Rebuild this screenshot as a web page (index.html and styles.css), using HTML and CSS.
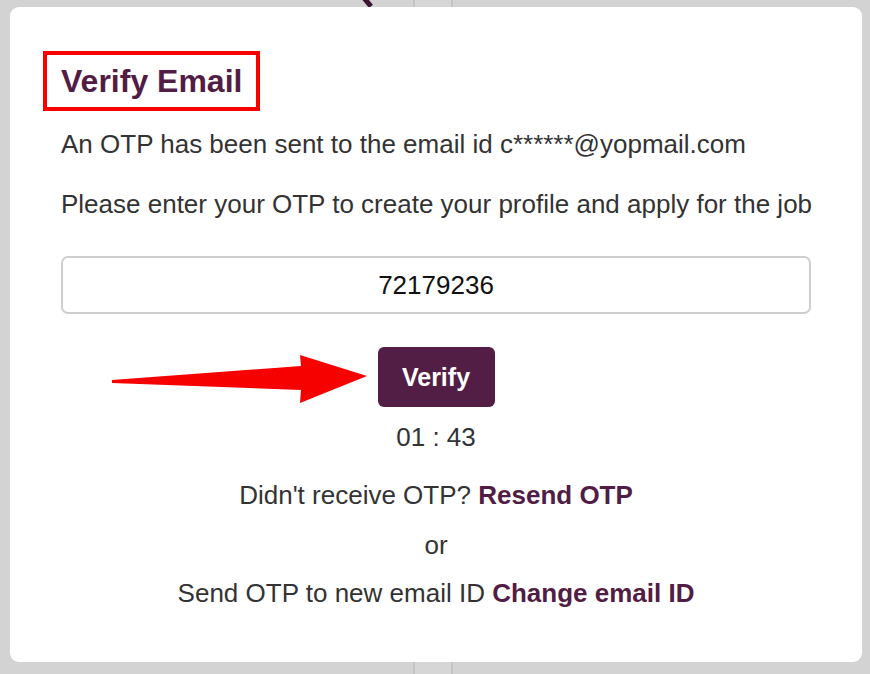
FILE: index.html
```html
<!DOCTYPE html>
<html lang="en">
<head>
  <meta charset="UTF-8" />
  <meta name="viewport" content="width=device-width, initial-scale=1.0"/>
  <title>Verify Email</title>
  <link rel="stylesheet" href="styles.css">
</head>
<body>

  <div class="backdrop-strip"></div>
  <div class="backdrop-mark"></div>

  <div class="modal">
    <div class="title-box">
      <h2>Verify Email</h2>
    </div>

    <p class="info">An OTP has been sent to the email id c******@yopmail.com</p>
    <p class="info">Please enter your OTP to create your profile and apply for the job</p>

    <input class="otp-input" type="text" value="72179236">

    <div class="actions">
      <button class="verify-btn">Verify</button>
      <p class="timer">01 : 43</p>
      <p class="line resend">Didn't receive OTP? <a href="#">Resend OTP</a></p>
      <p class="line or">or</p>
      <p class="line change">Send OTP to new email ID <a href="#">Change email ID</a></p>
    </div>
  </div>

  <svg class="arrow" width="280" height="60" viewBox="100 350 280 60">
    <polygon points="112,380 301,366 300,355 367,376 300,403 301,390 112,383" fill="#f70000"/>
  </svg>

</body>
</html>
```

FILE: styles.css
```css
body {
  font-family: "Liberation Sans", Arial, sans-serif;
  margin: 0;
  padding: 0;
  background-color: #d3d3d3;
  color: #333;
  width: 870px;
  height: 674px;
  overflow: hidden;
  position: relative;
}

.backdrop-strip {
  position: absolute;
  left: 413px;
  top: 0;
  width: 36px;
  height: 674px;
  background-color: #d6d6d6;
  border-left: 2px solid #c4c4c4;
  border-right: 2px solid #c4c4c4;
}

.backdrop-mark {
  position: absolute;
  left: 364px;
  top: -6px;
  width: 5px;
  height: 14px;
  background-color: #3a1630;
  transform: rotate(-40deg);
}

.modal {
  position: relative;
  margin: 7px 0 0 10px;
  width: 852px;
  height: 655px;
  box-sizing: border-box;
  padding: 44px 51px;
  background-color: #fff;
  border-radius: 9px;
}

.title-box {
  display: inline-block;
  margin-left: -18px;
  padding: 0 14px;
  border: 4px solid #f70000;
}

.title-box h2 {
  margin: 0;
  font-size: 32px;
  line-height: 52px;
  font-weight: bold;
  color: #521d44;
}

.info {
  margin: 18px 0 0;
  font-size: 26px;
  line-height: 30px;
  white-space: nowrap;
}

.info + .info {
  margin-top: 30px;
}

.otp-input {
  display: block;
  margin-top: 37px;
  width: 750px;
  height: 58px;
  box-sizing: border-box;
  border: 2px solid #cfcfcf;
  border-radius: 7px;
  font-family: inherit;
  font-size: 26px;
  color: #111;
  text-align: center;
  outline: none;
}

.actions {
  display: flex;
  flex-direction: column;
  align-items: center;
}

.verify-btn {
  margin-top: 33px;
  width: 117px;
  height: 60px;
  border: none;
  border-radius: 6px;
  background-color: #521e45;
  color: #fff;
  font-family: inherit;
  font-size: 25px;
  font-weight: bold;
}

.timer {
  margin: 15px 0 0;
  font-size: 26px;
  line-height: 30px;
}

.line {
  margin: 28px 0 0;
  font-size: 26px;
  line-height: 30px;
}

.line.or {
  margin-top: 20px;
}

.line.change {
  margin-top: 18px;
}

.line a {
  color: #521d44;
  font-weight: bold;
  text-decoration: none;
}

.arrow {
  position: absolute;
  left: 100px;
  top: 350px;
}
```
